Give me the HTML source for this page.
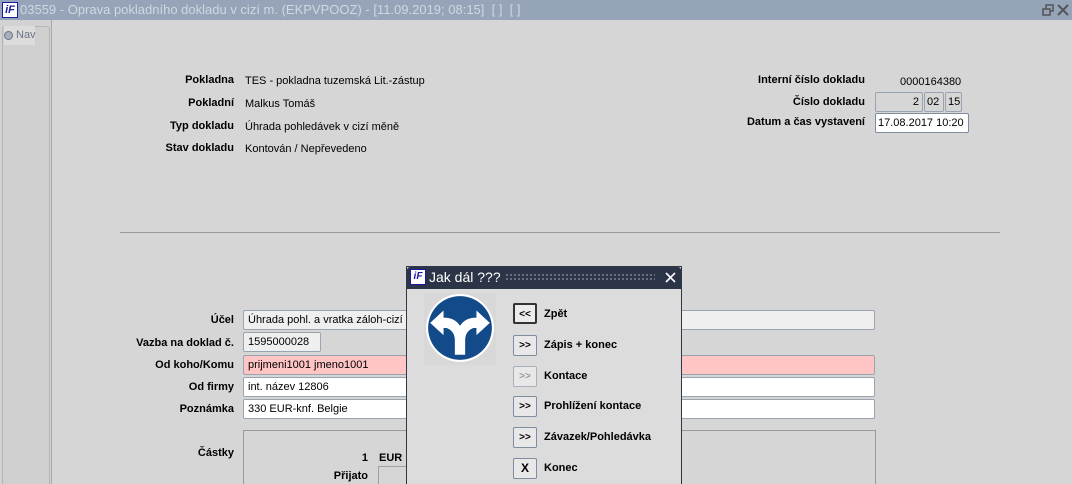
<!DOCTYPE html>
<html><head><meta charset="utf-8"><style>
*{margin:0;padding:0;box-sizing:border-box}
html,body{width:1072px;height:484px;overflow:hidden}
body{background:#d6d6d6;font-family:"Liberation Sans",Arial,sans-serif;font-size:11px;color:#000;position:relative}
.a{position:absolute;white-space:nowrap}
.tb{left:0;top:0;width:1072px;height:20px;background:#95a4b8;color:#d0d8e2;font-size:13px;line-height:20px}
.logo{position:absolute;width:16px;height:16px;background:#fff;border:1px solid #1a1aa0;color:#1a1aa0;font:bold italic 11px/14px "Liberation Sans",sans-serif;text-align:center}
.lb{font-weight:bold;text-align:right}
.in{position:absolute;height:20px;border:1px solid #9aa4b0;border-radius:2px;background:#fff;padding-left:4px;line-height:19px;font-size:11px;overflow:hidden;white-space:nowrap}
.btn{position:absolute;left:513px;width:24px;height:21px;border:1px solid #7e8ea0;border-radius:2px;background:#e8e8e8;font-weight:bold;font-size:10px;text-align:center;line-height:19px}
.bl{position:absolute;left:544px;font-weight:bold;font-size:11px}
</style></head><body>
<div class="a tb"><div class="logo" style="left:2px;top:2px">iF</div><span style="position:absolute;left:20px">03559 - Oprava pokladního dokladu v cizí m. (EKPVPOOZ) - [11.09.2019; 08:15]&nbsp; [ ]&nbsp; [ ]</span>
<svg style="position:absolute;left:1042px;top:4px" width="12" height="12"><rect x="4" y="1" width="7" height="6" fill="none" stroke="#555" stroke-width="1.5"/><rect x="1" y="5" width="7" height="6" fill="#95a4b8" stroke="#555" stroke-width="1.5"/></svg>
<svg style="position:absolute;left:1057px;top:4px" width="12" height="12"><path d="M1 1L11 11M11 1L1 11" stroke="#555" stroke-width="2"/></svg></div>
<div class="a" style="left:0;top:20px;width:52px;height:464px;background:#d2d2d2;border-right:1px solid #a8a8a8"></div>
<div class="a" style="left:2px;top:26px;width:48px;height:458px;border:1px solid #b4b4b4;border-bottom:none;background:#d0d0d0;border-radius:3px 3px 0 0"></div>
<div class="a" style="left:4px;top:26px;width:31px;height:19px;background:#dcdcdc"></div>
<div class="a" style="left:4px;top:31px;width:9px;height:9px;border-radius:50%;border:1px solid #6a7488;background:#a8b0c0"></div>
<div class="a" style="left:16px;top:29px;color:#6a7488;font-size:11px">Nav</div>

<div class="a lb" style="left:100px;width:134px;top:74px">Pokladna</div><div class="a" style="left:245px;top:75px">TES - pokladna tuzemská Lit.-zástup</div>
<div class="a lb" style="left:100px;width:134px;top:97px">Pokladní</div><div class="a" style="left:245px;top:98px">Malkus Tomáš</div>
<div class="a lb" style="left:100px;width:134px;top:120px">Typ dokladu</div><div class="a" style="left:245px;top:121px">Úhrada pohledávek v cizí měně</div>
<div class="a lb" style="left:100px;width:134px;top:142px">Stav dokladu</div><div class="a" style="left:245px;top:143px">Kontován / Nepřevedeno</div>

<div class="a lb" style="left:700px;width:165px;top:74px">Interní číslo dokladu</div><div class="a" style="left:900px;top:76px">0000164380</div>
<div class="a lb" style="left:700px;width:165px;top:96px">Číslo dokladu</div>
<div class="in" style="left:875px;top:92px;width:48px;background:#d6d6d6;text-align:right;padding-right:3px">2</div>
<div class="in" style="left:924px;top:92px;width:20px;background:#d6d6d6;padding-left:2px">02</div>
<div class="in" style="left:945px;top:92px;width:17px;background:#d6d6d6;padding-left:2px">15</div>
<div class="a lb" style="left:700px;width:165px;top:116px">Datum a čas vystavení</div>
<div class="in" style="left:875px;top:113px;width:94px;border-color:#7e8ea0;padding-left:2px">17.08.2017 10:20</div>

<div class="a" style="left:120px;top:232px;width:880px;height:1px;background:#9a9a9a"></div>

<div class="a lb" style="left:100px;width:134px;top:314px">Účel</div>
<div class="in" style="left:243px;top:310px;width:632px;background:#efefef">Úhrada pohl. a vratka záloh-cizí m</div>
<div class="a lb" style="left:100px;width:134px;top:337px">Vazba na doklad č.</div>
<div class="in" style="left:243px;top:332px;width:78px;background:#efefef">1595000028</div>
<div class="a lb" style="left:100px;width:134px;top:359px">Od koho/Komu</div>
<div class="in" style="left:243px;top:355px;width:632px;background:#ffc4c4">prijmeni1001 jmeno1001</div>
<div class="a lb" style="left:100px;width:134px;top:381px">Od firmy</div>
<div class="in" style="left:243px;top:377px;width:632px">int. název 12806</div>
<div class="a lb" style="left:100px;width:134px;top:403px">Poznámka</div>
<div class="in" style="left:243px;top:399px;width:632px">330 EUR-knf. Belgie</div>
<div class="a" style="left:243px;top:430px;width:633px;height:60px;border:1px solid #9a9a9a"></div>
<div class="a lb" style="left:100px;width:134px;top:447px">Částky</div>
<div class="a lb" style="left:330px;width:38px;top:452px">1</div><div class="a lb" style="left:379px;top:452px">EUR</div>
<div class="a lb" style="left:300px;width:68px;top:470px">Přijato</div>
<div class="a" style="left:378px;top:466px;width:40px;height:24px;border:1px solid #a0a0a0;background:#d6d6d6"></div>

<div class="a" style="left:406px;top:266px;width:276px;height:220px;background:#dcdcdc;border:1px solid #303848"></div>
<div class="a" style="left:407px;top:267px;width:274px;height:22px;background:#2b3547;border-radius:3px 3px 0 0"></div>
<div class="logo" style="left:410px;top:269px;font-size:10px">iF</div>
<div class="a" style="left:429px;top:269px;color:#fff;font-size:14px">Jak dál ???</div>
<div class="a" style="left:505px;top:273px;width:150px;height:9px;background-image:radial-gradient(#7a8496 1px,transparent 1px);background-size:4px 4px"></div>
<svg class="a" style="left:665px;top:272px" width="11" height="11"><path d="M1 1L10 10M10 1L1 10" stroke="#fff" stroke-width="1.6"/></svg>
<svg class="a" style="left:424px;top:293px" width="72" height="72" viewBox="0 0 70 70">
<rect width="70" height="70" fill="#d8d8d8"/>
<circle cx="35" cy="34" r="33" fill="#fff"/><circle cx="35" cy="34" r="31" fill="#124a8a"/>
<path d="M30 60 L30 46 Q30 37 22 34 L19 34 L19 41 L6 29 L19 17 L19 24 Q30 24 35 32 Q40 24 51 24 L51 17 L64 29 L51 41 L51 34 L48 34 Q40 37 40 46 L40 60 Z" fill="#fff"/>
</svg>
<div class="btn" style="top:303px;border:2px solid #333;background:#ececec">&lt;&lt;</div><div class="bl" style="top:308px">Zpět</div>
<div class="btn" style="top:335px">&gt;&gt;</div><div class="bl" style="top:339px">Zápis + konec</div>
<div class="btn" style="top:366px;color:#999;border-color:#a8b0bc">&gt;&gt;</div><div class="bl" style="top:370px">Kontace</div>
<div class="btn" style="top:396px">&gt;&gt;</div><div class="bl" style="top:400px">Prohlížení kontace</div>
<div class="btn" style="top:427px">&gt;&gt;</div><div class="bl" style="top:431px">Závazek/Pohledávka</div>
<div class="btn" style="top:458px;font-size:12px">X</div><div class="bl" style="top:462px">Konec</div>
</body></html>
